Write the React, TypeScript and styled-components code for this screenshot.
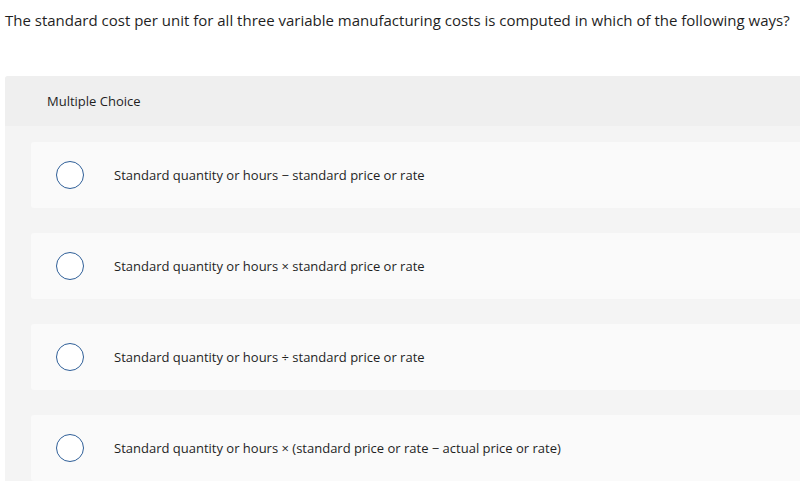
import React from "react";
import styled, { createGlobalStyle } from "styled-components";

const Global = createGlobalStyle`
  html, body { margin: 0; padding: 0; background: #fff; }
  body { font-family: "Open Sans", "Liberation Sans", sans-serif; color: #222; }
`;

const Page = styled.div`
  width: 800px;
  height: 481px;
  overflow: hidden;
  display: flex;
  flex-direction: column;
`;

const Question = styled.p`
  margin: 0;
  padding: 10px 0 0 5px;
  height: 76px;
  flex-shrink: 0;
  box-sizing: border-box;
  font-size: 15px;
  line-height: 20px;
  color: #1f1f1f;
  white-space: nowrap;
`;

const Panel = styled.section`
  margin-left: 5px;
  flex: 1;
  background: #f4f4f4;
  border-radius: 3px 0 0 0;
  display: flex;
  flex-direction: column;
`;

const PanelHeader = styled.div`
  height: 50px;
  flex-shrink: 0;
  background: #efefef;
  display: flex;
  align-items: center;
  padding-left: 42px;
  font-size: 13px;
  color: #1f1f1f;
  border-radius: 3px 0 0 0;
`;

const Choices = styled.div`
  display: flex;
  flex-direction: column;
  gap: 25px;
  padding: 16px 0 0 26px;
`;

const Choice = styled.label`
  height: 66px;
  flex-shrink: 0;
  background: #fafafa;
  border-radius: 3px 0 0 3px;
  display: flex;
  align-items: center;
  padding-left: 25px;
  gap: 30px;
  font-size: 13px;
  color: #1f1f1f;
  cursor: pointer;
`;

const Radio = styled.span`
  width: 28px;
  height: 28px;
  box-sizing: border-box;
  border-radius: 50%;
  border: 1.5px solid #2f5f98;
  background: #fff;
  flex-shrink: 0;
`;

const options = [
  "Standard quantity or hours \u2212 standard price or rate",
  "Standard quantity or hours \u00d7 standard price or rate",
  "Standard quantity or hours \u00f7 standard price or rate",
  "Standard quantity or hours \u00d7 (standard price or rate \u2212 actual price or rate)",
];

export default function App() {
  return (
    <Page>
      <Global />
      <Question>
        The standard cost per unit for all three variable manufacturing costs is computed in which of the following ways?
      </Question>
      <Panel>
        <PanelHeader>Multiple Choice</PanelHeader>
        <Choices>
          {options.map((o) => (
            <Choice key={o}>
              <Radio />
              <span>{o}</span>
            </Choice>
          ))}
        </Choices>
      </Panel>
    </Page>
  );
}
